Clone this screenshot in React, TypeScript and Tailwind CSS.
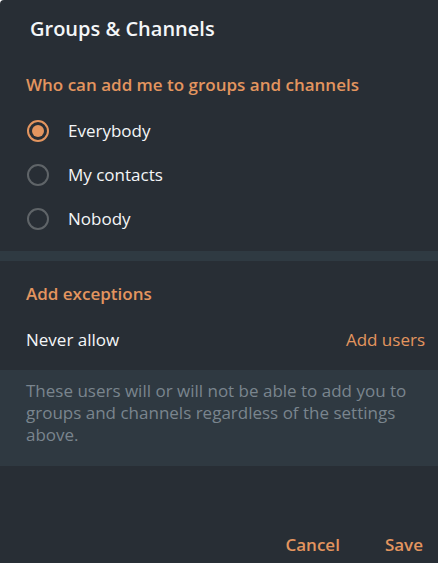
import React from "react";

const font = { fontFamily: '"Open Sans", "Noto Sans", sans-serif' };

function Radio({ label, checked }: { label: string; checked?: boolean }) {
  return (
    <div className="flex h-[44px] items-center">
      <div className="ml-[27px] flex h-[22px] w-[22px] items-center justify-center">
        <div
          className={
            checked
              ? "flex h-[22px] w-[22px] items-center justify-center rounded-full border-2 border-[#e3955f]"
              : "h-[22px] w-[22px] rounded-full border-2 border-[#5f6468]"
          }
        >
          {checked && <div className="h-[12px] w-[12px] rounded-full bg-[#e3955f]" />}
        </div>
      </div>
      <span className="ml-[19px] text-[17px] leading-[24px] text-[#f4f6f8]">{label}</span>
    </div>
  );
}

export default function App() {
  return (
    <div
      className="flex h-[563px] w-[438px] flex-col overflow-hidden rounded-tl-[4px] bg-[#282e35]"
      style={font}
    >
      <div className="flex h-[58px] items-center pl-[30px]">
        <h1 className="text-[20px] leading-[28px] font-semibold text-[#f4f6f8]">
          Groups &amp; Channels
        </h1>
      </div>

      <div className="flex h-[51px] items-center pl-[26px] pt-[2px]">
        <h2 className="text-[17px] leading-[24px] font-semibold text-[#e3955f]">
          Who can add me to groups and channels
        </h2>
      </div>

      <div className="flex flex-col">
        <Radio label="Everybody" checked />
        <Radio label="My contacts" />
        <Radio label="Nobody" />
      </div>

      <div className="mt-[10px] h-[10px] bg-[#2f3a42]" />

      <div className="flex h-[66px] items-center pl-[26px]">
        <h2 className="text-[17px] leading-[24px] font-semibold text-[#e3955f]">
          Add exceptions
        </h2>
      </div>

      <div className="flex h-[43px] items-start justify-between pl-[26px] pr-[13px] pt-[1px]">
        <span className="text-[17px] leading-[24px] text-[#f4f6f8]">Never allow</span>
        <span className="text-[17px] leading-[24px] text-[#e3955f]">Add users</span>
      </div>

      <div className="h-[96px] bg-[#2f3941] pl-[26px] pr-[20px] pt-[10px]">
        <p className="text-[17px] leading-[22px] text-[#7a858e]">
          These users will or will not be able to add you to groups and channels regardless of
          the settings above.
        </p>
      </div>

      <div className="flex flex-1 items-end justify-end gap-[45px] pb-[6px] pr-[15px]">
        <button className="text-[17px] leading-[24px] font-semibold text-[#e3955f]">Cancel</button>
        <button className="text-[17px] leading-[24px] font-semibold text-[#e3955f]">Save</button>
      </div>
    </div>
  );
}
